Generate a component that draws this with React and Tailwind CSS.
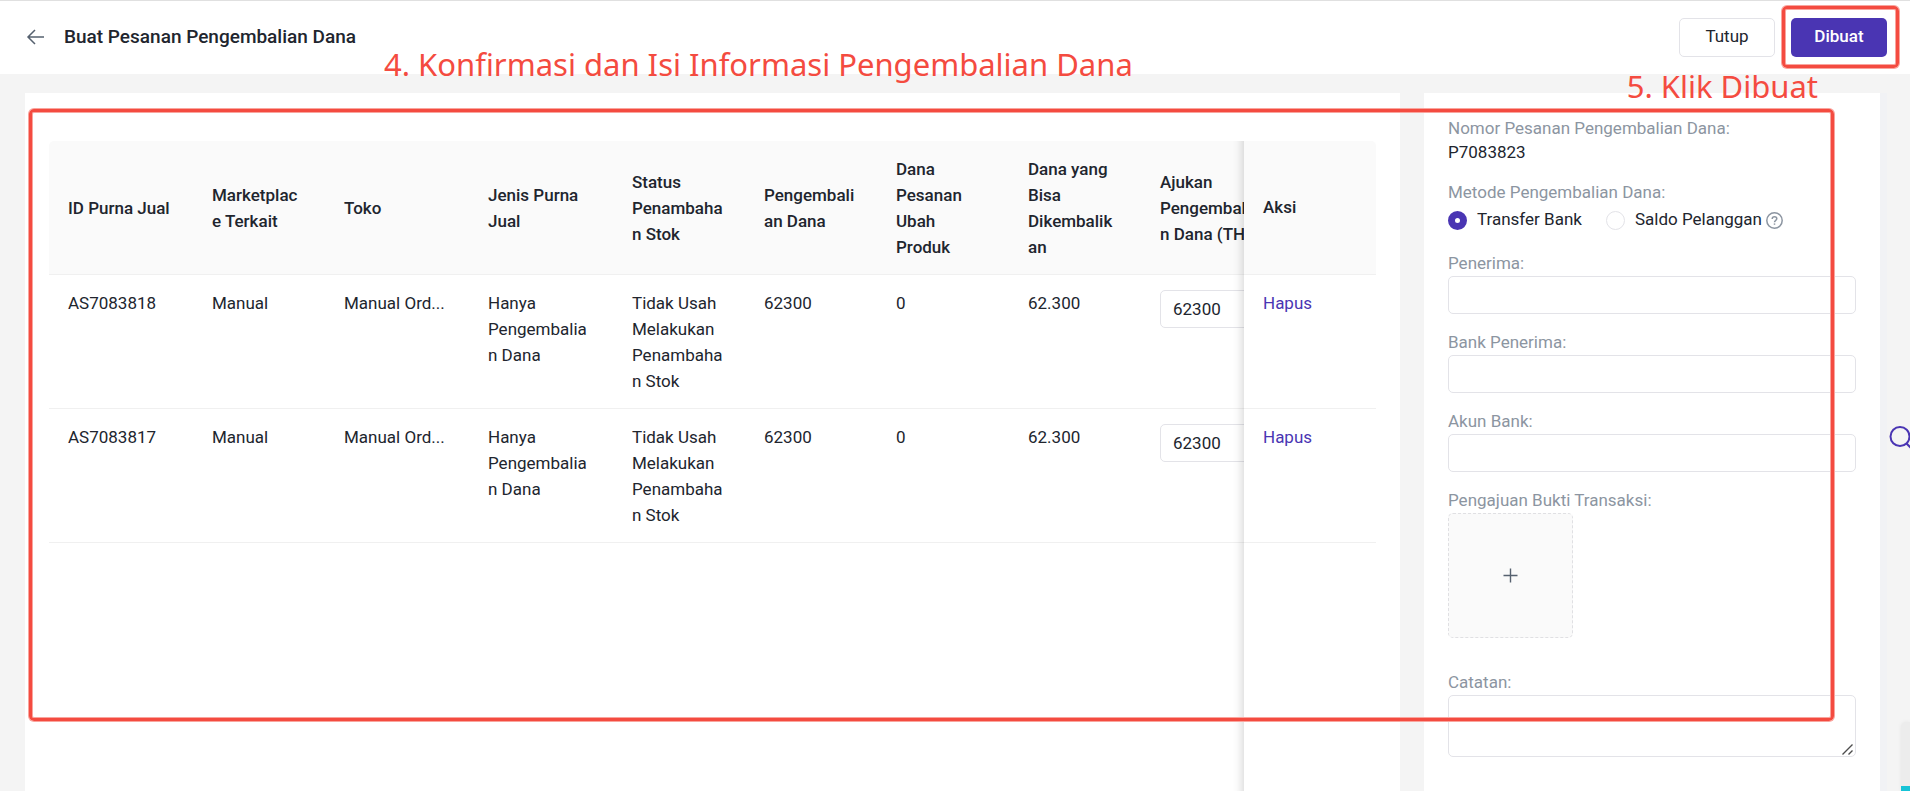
import { useState } from 'react';

const initialRows = [
  { id: 'AS7083818', amount: '62300' },
  { id: 'AS7083817', amount: '62300' },
];

const headers = [
  'ID Purna Jual',
  'Marketplace Terkait',
  'Toko',
  'Jenis Purna Jual',
  'Status Penambahan Stok',
  'Pengembalian Dana',
  'Dana Pesanan Ubah Produk',
  'Dana yang Bisa Dikembalikan',
  'Ajukan Pengembalian Dana (THB)',
];

const inputClass =
  'block w-full rounded-[5px] border border-[#e3e3e8] bg-white px-3 focus:border-[#4a35b3] focus:outline-none';

function Field({ id, label }) {
  return (
    <div className="mb-4">
      <label htmlFor={id} className="block leading-[25px] text-[#8c95a1]">
        {label}
      </label>
      <input id={id} type="text" className={`${inputClass} h-[38px]`} />
    </div>
  );
}

function Radio({ label, checked, onChange }) {
  return (
    <label className="flex items-center gap-[10px]">
      <input
        type="radio"
        name="method"
        checked={checked}
        onChange={onChange}
        className="size-[19px] appearance-none rounded-full border border-[#e3e3e8] bg-white checked:border-[7px] checked:border-[#4a35b3]"
      />
      {label}
    </label>
  );
}

function Header() {
  return (
    <header className="flex h-[74px] items-center border-t border-[#e0e0e0] bg-white pr-[23px] pb-px pl-[26px]">
      <button type="button" aria-label="Kembali" className="mr-[18px]">
        <svg width="20" height="20" viewBox="0 0 20 20" fill="none" stroke="#56616f" strokeWidth="1.5">
          <path d="M18 10H2M9 3L2 10L9 17" />
        </svg>
      </button>
      <h1 className="flex-1 text-[19px] font-medium">Buat Pesanan Pengembalian Dana</h1>
      <div className="flex gap-4">
        <button type="button" className="h-[39px] w-24 rounded-[5px] border border-[#e3e3e8]">
          Tutup
        </button>
        <button type="button" className="h-[39px] w-24 rounded-[5px] bg-[#4a35b3] font-medium text-white">
          Dibuat
        </button>
      </div>
    </header>
  );
}

function RefundTable() {
  const [rows, setRows] = useState(initialRows);

  const setAmount = (id, amount) => {
    setRows(rows.map((r) => (r.id === id ? { ...r, amount } : r)));
  };

  return (
    <div className="relative flex-1">
      <div className="h-full overflow-x-auto rounded-t-[5px] [scrollbar-width:none]">
        <table className="w-full min-w-[1368px] table-fixed border-separate border-spacing-0 [overflow-wrap:anywhere]">
          <colgroup>
            <col className="w-[144px]" />
            <col className="w-[132px]" />
            <col className="w-[144px]" />
            <col className="w-[144px]" />
            <col className="w-[132px]" />
            <col className="w-[132px]" />
            <col className="w-[132px]" />
            <col className="w-[132px]" />
            <col className="w-[144px]" />
            <col className="w-[132px]" />
          </colgroup>
          <thead>
            <tr className="text-left">
              {headers.map((h) => (
                <th
                  key={h}
                  className="border-b border-[#f0f0f0] bg-[#fafafa] pt-[15px] pr-[21px] pb-[14px] pl-[19px] font-medium leading-[26px]"
                >
                  {h}
                </th>
              ))}
              <th className="sticky right-0 z-20 border-b border-[#f0f0f0] bg-[#fafafa] px-[19px] font-medium">
                Aksi
              </th>
            </tr>
          </thead>
          <tbody>
            {rows.map((row) => (
              <tr
                key={row.id}
                className="align-top leading-[26px] *:border-b *:border-[#f0f0f0] *:px-[19px] *:pt-[15px] *:pb-[14px]"
              >
                <td>{row.id}</td>
                <td>Manual</td>
                <td>Manual Ord...</td>
                <td>Hanya Pengembalian Dana</td>
                <td>Tidak Usah Melakukan Penambahan Stok</td>
                <td>62300</td>
                <td>0</td>
                <td>62.300</td>
                <td>
                  <input
                    type="text"
                    aria-label={`Ajukan Pengembalian Dana ${row.id}`}
                    value={row.amount}
                    onChange={(e) => setAmount(row.id, e.target.value)}
                    className={`${inputClass} h-[38px]`}
                  />
                </td>
                <td className="sticky right-0 z-20 bg-white">
                  <button
                    type="button"
                    onClick={() => setRows(rows.filter((r) => r.id !== row.id))}
                    className="text-[#4a35b3]"
                  >
                    Hapus
                  </button>
                </td>
              </tr>
            ))}
          </tbody>
        </table>
      </div>
      {/* shadow on the edge of the fixed column */}
      <div className="pointer-events-none absolute inset-y-0 right-[132px] w-9 shadow-[inset_-12px_0_10px_-10px_rgba(5,5,5,0.16)]" />
    </div>
  );
}

function RefundForm() {
  const [method, setMethod] = useState('bank');

  return (
    <form className="w-[456px] shrink-0 bg-white px-6 pt-[23px]">
      <div className="mb-4 leading-6">
        <div className="text-[#8c95a1]">Nomor Pesanan Pengembalian Dana:</div>
        <div>P7083823</div>
      </div>

      <fieldset className="mb-4">
        <legend className="leading-[25px] text-[#8c95a1]">Metode Pengembalian Dana:</legend>
        <div className="flex h-[30px] items-center">
          <Radio label="Transfer Bank" checked={method === 'bank'} onChange={() => setMethod('bank')} />
          <div className="ml-6 flex items-center gap-1">
            <Radio label="Saldo Pelanggan" checked={method === 'saldo'} onChange={() => setMethod('saldo')} />
            <svg width="17" height="17" viewBox="0 0 17 17" fill="none" stroke="#8c95a1" strokeWidth="1.5">
              <circle cx="8.5" cy="8.5" r="7.7" />
              <path d="M6.2 6.9C6.2 5.5 7.2 4.7 8.5 4.7S10.8 5.5 10.8 6.7C10.8 8.3 8.5 8.3 8.5 10.2" />
              <path d="M8.5 11.4V12.8" />
            </svg>
          </div>
        </div>
      </fieldset>

      <Field id="penerima" label="Penerima:" />
      <Field id="bank-penerima" label="Bank Penerima:" />
      <Field id="akun-bank" label="Akun Bank:" />

      <div className="mb-8">
        <label htmlFor="bukti" className="block leading-[25px] text-[#8c95a1]">
          Pengajuan Bukti Transaksi:
        </label>
        <label
          htmlFor="bukti"
          className="relative flex size-[125px] cursor-pointer items-center justify-center rounded-[5px] border border-dashed border-[#e0e0e3] bg-[#fafafa]"
        >
          <svg width="15" height="15" viewBox="0 0 15 15" stroke="#56616f" strokeWidth="1.4">
            <path d="M7.5 0.5V14.5M0.5 7.5H14.5" />
          </svg>
          <input id="bukti" type="file" className="sr-only" />
        </label>
      </div>

      <label htmlFor="catatan" className="block leading-[25px] text-[#8c95a1]">
        Catatan:
      </label>
      <div className="relative">
        <textarea id="catatan" className={`${inputClass} h-[62px] resize-none py-1`} />
        <svg
          width="11"
          height="11"
          viewBox="0 0 11 11"
          stroke="#4d4d4d"
          strokeWidth="1.4"
          className="pointer-events-none absolute right-[3px] bottom-[2px]"
        >
          <path d="M0.5 10.5L10.5 0.5M6.5 10.5L10.5 6.5" />
        </svg>
      </div>
    </form>
  );
}

const frameClass =
  'pointer-events-none absolute z-30 rounded-[5px] border-[3px] border-[#f44b40] shadow-[0_0_0_1px_#f9a59e,inset_0_0_0_1px_#f9a59e]';

export default function App() {
  return (
    <div className="relative flex h-screen flex-col overflow-hidden bg-[#f4f4f4] font-['Roboto','Liberation_Sans',sans-serif] text-[17px] text-[#21252e]">
      <Header />
      <main className="mt-[19px] flex flex-1 gap-6 pl-[25px]">
        <section className="flex min-w-0 flex-1 flex-col bg-white px-6 pt-12">
          <RefundTable />
        </section>
        <div className="mr-[23px] flex border-r-[7px] border-[#f1f2f5]">
          <RefundForm />
        </div>
      </main>

      {/* floating widgets on the right edge */}
      <button type="button" aria-label="Cari" className="absolute top-[425px] -right-1">
        <svg width="25" height="25" viewBox="0 0 25 25" fill="none" stroke="#4a35b3" strokeWidth="2">
          <circle cx="11" cy="11.5" r="9.5" />
          <path d="M17.5 18.5L23 24" />
        </svg>
      </button>
      <div className="absolute right-0 bottom-0 flex h-[69px] w-[9px] flex-col justify-end rounded-tl-[5px] bg-[#ececec] shadow-[0_0_4px_rgba(0,0,0,0.06)]">
        <div className="h-[5px] bg-[#16c3d6]" />
      </div>

      {/* tutorial annotations */}
      <div className={`${frameClass} top-[109px] right-[76px] bottom-[70px] left-[29px]`} />
      <div className={`${frameClass} top-[6px] right-[11px] h-[62px] w-[117px]`} />
      <p className="absolute top-[42px] left-[384px] z-30 font-['Noto_Sans','Open_Sans',sans-serif] text-[31px] leading-[44px] whitespace-nowrap text-[#f44b40]">
        4. Konfirmasi dan Isi Informasi Pengembalian Dana
      </p>
      <p className="absolute top-[64px] right-[92px] z-30 font-['Noto_Sans','Open_Sans',sans-serif] text-[31px] leading-[44px] whitespace-nowrap text-[#f44b40]">
        5. Klik Dibuat
      </p>
    </div>
  );
}
